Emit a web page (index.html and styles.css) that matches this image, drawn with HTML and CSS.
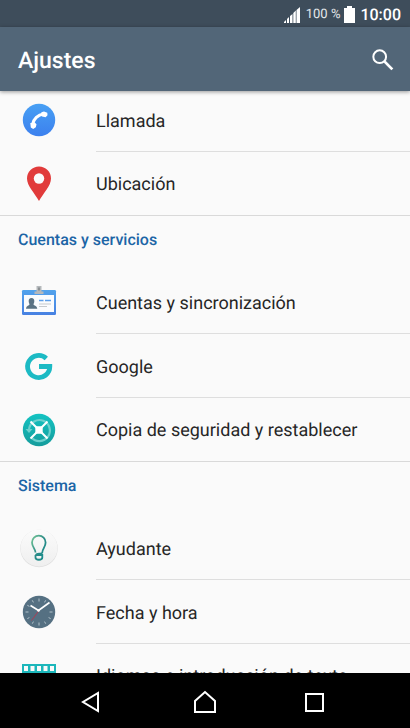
FILE: index.html
```html
<!DOCTYPE html>
<html lang="es">
<head>
<meta charset="utf-8">
<meta name="viewport" content="width=device-width, initial-scale=1">
<title>Ajustes</title>
<link rel="stylesheet" href="styles.css">
</head>
<body>
<div class="status">
  <svg class="signal" viewBox="0 0 16 16" aria-hidden="true"><path d="M0 16v-1l2-2v3zM3 16v-4l2-2v6zM6 16V9l2.500-2v9zM9.300 16V6l2.500-2.500V16zM12.500 16V3L16 0v16z" fill="#fff"/></svg>
  <span class="percent">100 %</span>
  <svg class="battery" viewBox="0 0 11 17" aria-hidden="true"><path d="M3 0h5v2h3v15H0V2h3z" fill="#fff"/></svg>
  <span class="clock">10:00</span>
</div>
<header class="appbar">
  <h1>Ajustes</h1>
  <button class="search" aria-label="Buscar">
    <svg viewBox="0 0 20 20" fill="none" stroke="#fff" aria-hidden="true"><circle cx="7" cy="7" r="5.800" stroke-width="1.800"/><path d="M11.500 11.500l7 7" stroke-width="2.500"/></svg>
  </button>
</header>
<main class="viewport">
  <div class="list">
    <section>
      <a class="row" href="#llamada">
        <svg class="icon" viewBox="0 0 40 40" aria-hidden="true">
          <defs><linearGradient id="call" x2="0" y2="1"><stop stop-color="#48a0f4"/><stop offset="1" stop-color="#3c80ee"/></linearGradient></defs>
          <circle cx="20" cy="20" r="16.200" fill="url(#call)"/>
          <path d="M13.500 24.500C14.500 19 19 14.500 24.500 14" fill="none" stroke="#fff" stroke-width="3"/>
          <path d="M11.300 23l4.700-.2 1.500 1.500-.7 3-2.600 1.800-2.400-1.600zM22.300 12.300l2.700-.9 3.300 1.300.2 2.600-1.900 1.900-3.600-.8z" fill="#fff"/>
        </svg>
        <span class="label">Llamada</span>
      </a>
      <a class="row" href="#ubicacion">
        <svg class="icon" viewBox="0 0 40 40" aria-hidden="true">
          <path d="M20 37C16 29.500 8 22 8 14.500a12 12 0 0 1 24 0C32 22 24 29.500 20 37z" fill="#e13b3b"/>
          <circle cx="20" cy="14.500" r="5.200" fill="#fafafa"/>
        </svg>
        <span class="label">Ubicación</span>
      </a>
    </section>
    <section>
      <h2>Cuentas y servicios</h2>
      <a class="row" href="#cuentas">
        <svg class="icon" viewBox="0 0 40 40" aria-hidden="true">
          <defs><linearGradient id="card" x2="0" y2="1"><stop stop-color="#52a3ec"/><stop offset="1" stop-color="#4781e2"/></linearGradient></defs>
          <rect x="3" y="8" width="34" height="25" rx="1.200" fill="url(#card)"/>
          <rect x="5" y="13" width="30" height="17" fill="#fafcfe"/>
          <path d="M17.500 4h5v5.500h2V12h-9V9.500h2z" fill="#b5b9bc"/><rect x="19" y="5.500" width="2" height="3" fill="#8a8f92"/>
          <path d="M12.500 16c2 0 3 1.400 2.800 3.500-.1 1.500-.8 2.300-.8 3 0 1 3.500.8 3.800 4.300H7c.3-3.500 3.500-3.300 3.500-4.300 0-.7-.7-1.500-.8-3-.2-2.100.8-3.500 2.800-3.500z" fill="#5a7384"/>
          <path d="M20 18.500h4.500M26 18.500h6" stroke="#5c9fea" stroke-width="1.600"/>
          <path d="M20 22h12M20 24.500h8" stroke="#c5cacd"/>
        </svg>
        <span class="label">Cuentas y sincronización</span>
      </a>
      <a class="row" href="#google">
        <svg class="icon" viewBox="0 0 40 40" aria-hidden="true">
          <path d="M27.300 12.400A11.100 11.100 0 1 0 30.800 20.500H20" fill="none" stroke="#1cbac4" stroke-width="4.800"/>
        </svg>
        <span class="label">Google</span>
      </a>
      <a class="row" href="#copia">
        <svg class="icon" viewBox="0 0 40 40" aria-hidden="true">
          <defs><linearGradient id="backup" x2="0" y2="1"><stop stop-color="#14c3c2"/><stop offset="1" stop-color="#159c9c"/></linearGradient></defs>
          <circle cx="20" cy="20" r="16.200" fill="url(#backup)"/>
          <path d="M12.500 27.500A10.500 10.500 0 1 0 10 19" fill="none" stroke="#6dd0cd" stroke-width="2.200"/>
          <path d="M6.500 19h7L10 23z" fill="#6dd0cd"/>
          <path d="M11.500 11.500l17 17M28.500 11.500l-17 17" stroke="#fff" stroke-width="2"/>
          <rect x="16.300" y="16.300" width="7.400" height="7.400" rx="1.500" fill="#fff"/>
        </svg>
        <span class="label">Copia de seguridad y restablecer</span>
      </a>
    </section>
    <section>
      <h2>Sistema</h2>
      <a class="row" href="#ayudante">
        <svg class="icon" viewBox="0 0 40 40" aria-hidden="true">
          <defs>
            <linearGradient id="bulb" x2="1" y2="1"><stop stop-color="#75c696"/><stop offset=".5" stop-color="#2c8b87"/><stop offset="1" stop-color="#168d8e"/></linearGradient>
            <linearGradient id="disc" x2="0" y2="1"><stop stop-color="#fbfbfb"/><stop offset="1" stop-color="#efefef"/></linearGradient>
          </defs>
          <circle cx="20" cy="20.500" r="18.700" fill="#dedede"/>
          <circle cx="20" cy="20" r="18.500" fill="url(#disc)"/>
          <path d="M16.500 24.500c0-3.500-3.500-5.500-3.500-10a6.800 6.800 0 0 1 13.600 0c0 4.500-3.300 6.500-3.300 10 0 1.500-6.300.8-6.300 2.500h6.300v2.500c0 3-6.800 3-6.800 0V27" fill="none" stroke="url(#bulb)" stroke-width="1.800"/>
        </svg>
        <span class="label">Ayudante</span>
      </a>
      <a class="row" href="#fecha">
        <svg class="icon" viewBox="0 0 40 40" aria-hidden="true">
          <circle cx="20" cy="20" r="16.200" fill="#557082"/>
          <g stroke="#b2c1ca" stroke-width="1"><path d="M20 6.500v3M20 30.500v3M6.500 20h3M30.500 20h3M13.250 8.300l1.200 2.100M25.500 29.600l1.200 2.100M8.300 13.250l2.100 1.200M29.600 25.500l2.100 1.200M8.300 26.700l2.100-1.200M26.700 8.300l-1.200 2.100M13.250 31.700l1.200-2.100"/></g>
          <path d="M20 18.500l-7.500 10" stroke="#a93d54" stroke-width="1"/>
          <path d="M11.500 13.500l8 5 11-8" fill="none" stroke="#fff" stroke-width="1.700"/>
          <circle cx="19.500" cy="18.500" r="1.300" fill="#fff"/>
        </svg>
        <span class="label">Fecha y hora</span>
      </a>
      <a class="row" href="#idiomas">
        <svg class="icon" viewBox="0 0 40 40" aria-hidden="true">
          <rect x="3" y="8" width="34" height="25" fill="#1cb7bb"/>
          <g fill="#fafafa"><path d="M5 10h4v5H5zM11.500 10h4v5h-4zM18 10h4v5h-4zM24.500 10h4v5h-4zM31 10h4v5h-4zM5 17h4v4H5zM11.500 17h4v4h-4zM18 17h4v4h-4zM24.500 17h4v4h-4zM31 17h4v4h-4zM9 25h22v4H9z"/></g>
        </svg>
        <span class="label">Idiomas e introducción de texto</span>
      </a>
    </section>
  </div>
</main>
<nav class="navbar">
  <button aria-label="Atrás"><svg viewBox="0 0 30 24" aria-hidden="true"><path d="M18 3v18L3 12z"/></svg></button>
  <button aria-label="Inicio"><svg viewBox="0 0 30 24" aria-hidden="true"><path d="M5 22V11L15 2l10 9v11z"/></svg></button>
  <button aria-label="Recientes"><svg viewBox="0 0 30 24" aria-hidden="true"><path d="M6 4h17v17H6z"/></svg></button>
</nav>
</body>
</html>
```
FILE: styles.css
```css
* { box-sizing: border-box; }

body {
  margin: 0;
  height: 100vh;
  display: flex;
  flex-direction: column;
  background: #fafafa;
  color: #262626;
  font-family: Roboto, "Liberation Sans", sans-serif;
  text-rendering: geometricPrecision;
}

button {
  display: grid;
  place-items: center;
  padding: 0;
  border: 0;
  background: none;
}

svg { display: block; flex: none; }

.status {
  flex: none;
  height: 27px;
  padding: 2px 9px 0 0;
  display: flex;
  align-items: center;
  justify-content: flex-end;
  background: #3e4d5b;
  color: #fff;
}

.signal { width: 16px; height: 16px; }
.percent { margin: 0 4px 0 6px; font-size: 13px; color: #e4e8eb; }
.battery { width: 11px; height: 17px; }
.clock { margin-left: 5px; font-size: 16px; font-weight: 500; }

.appbar {
  flex: none;
  height: 64px;
  padding: 2px 16px 0 18px;
  display: flex;
  align-items: center;
  justify-content: space-between;
  position: relative;
  z-index: 1;
  background: #526678;
  color: #fff;
  box-shadow: 0 1px 4px rgba(0, 0, 0, 0.4);
}

h1 {
  margin: 0;
  padding-top: 2px;
  font-size: 23px;
  line-height: 28px;
  font-weight: 500;
}

.search svg { width: 22px; height: 22px; }

.viewport {
  flex: 1;
  min-height: 0;
  overflow: hidden;
}

/* The list rests slightly scrolled under the app bar. */
.list { margin-top: -3px; }

section + section { border-top: 1px solid #d9d9d9; }

h2 {
  margin: 0;
  height: 54px;
  padding: 12px 18px 0;
  font-size: 16px;
  line-height: 24px;
  font-weight: 500;
  color: #1c65a6;
}

.row {
  height: 64px;
  display: grid;
  grid-template-columns: 77px 1fr;
  align-items: center;
  padding-left: 19px;
  color: inherit;
  text-decoration: none;
}

.row:last-child { height: 63px; }

.icon { width: 40px; height: 40px; }

.label {
  height: 100%;
  padding-top: 4px;
  display: flex;
  align-items: center;
  border-bottom: 1px solid #dedede;
  font-size: 18px;
  white-space: nowrap;
}

.row:last-child .label {
  padding-top: 2px;
  border-color: transparent;
}

.navbar {
  flex: none;
  height: 55px;
  padding: 2px 40px 0;
  display: grid;
  grid-template-columns: repeat(3, 1fr);
  background: #000;
}

.navbar svg {
  width: 30px;
  height: 24px;
  fill: none;
  stroke: #fff;
  stroke-width: 2;
}
```
